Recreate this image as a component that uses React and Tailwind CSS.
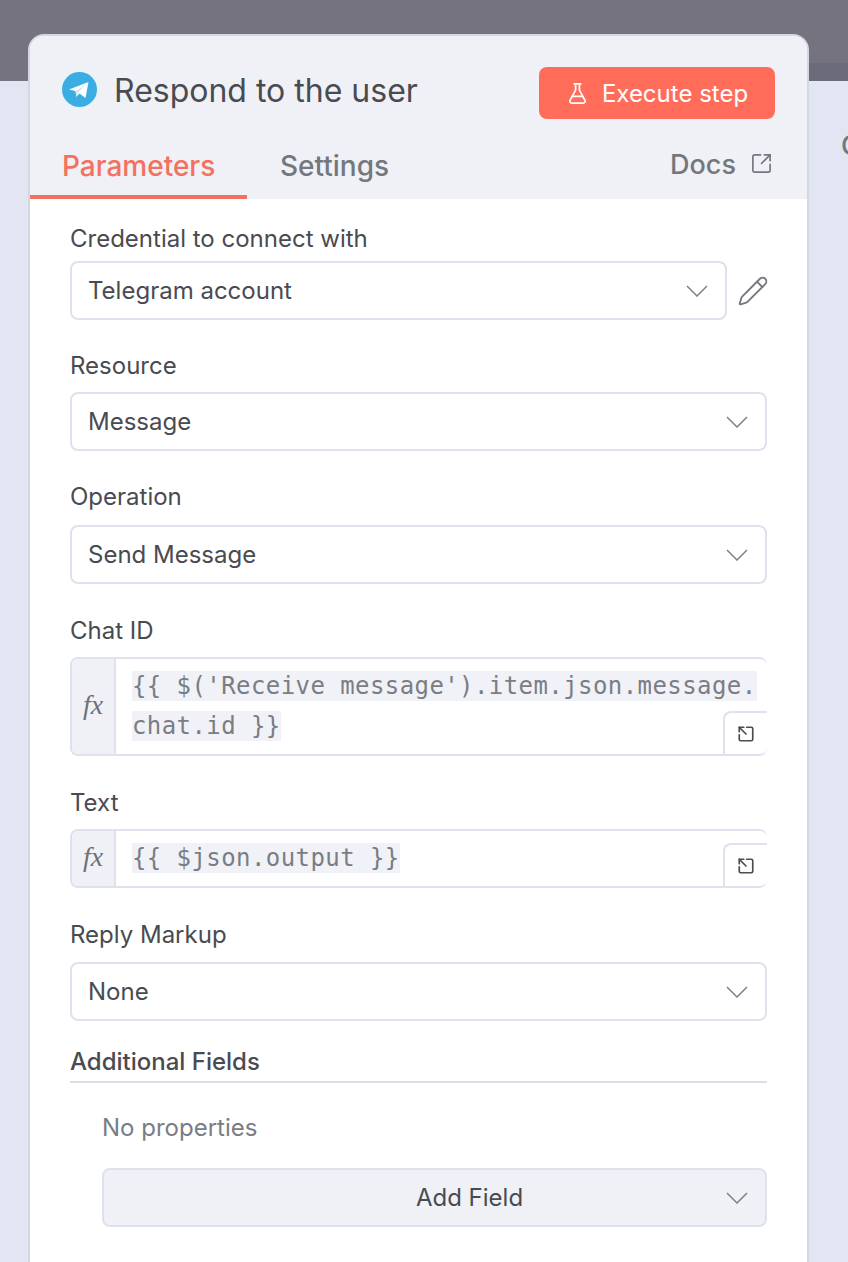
import { FlaskConical, Pencil, SquareArrowOutUpRight } from 'lucide-react';

const Chevron = () => (
  <svg width="22" height="12" viewBox="0 0 22 12" fill="none" stroke="#7e8186" strokeWidth="1.5" className="shrink-0">
    <path d="M1 1l10 10L21 1" />
  </svg>
);

const TelegramIcon = () => (
  <svg width="35" height="35" viewBox="0 0 35 35" className="shrink-0">
    <circle cx="17.5" cy="17.5" r="17.5" fill="#3aaee3" />
    <path d="M7 17.5L26.5 10l-3 16-6-4.5-3 3-1-5.5z" fill="#fff" />
    <path d="M13.500 19.500L24 12l-8 9-1.500 4.500z" fill="#d3e6f2" />
  </svg>
);

const Label = ({ children, className = '' }) => (
  <div className={`h-[30px] text-[24px] leading-[30px] text-[#494b50] ${className}`}>{children}</div>
);

const Select = ({ value, className = '' }) => (
  <div className={`flex h-[59px] items-center justify-between rounded-lg border-2 border-[#dfe1ec] bg-white pl-[16px] pr-[17px] text-[24px] text-[#494b50] ${className}`}>
    <span className="pt-px">{value}</span>
    <Chevron />
  </div>
);

const ExpandButton = () => (
  <div className="absolute bottom-0 right-0 flex h-[43px] w-[44px] items-center justify-center rounded-tl-lg border-l-2 border-t-2 border-[#dfe1ec] bg-white">
    <SquareArrowOutUpRight size={18} strokeWidth={2.25} color="#4a4d52" className="-scale-x-100" />
  </div>
);

const Expression = ({ lines, height, className = '' }) => (
  <div className={`relative flex overflow-hidden rounded-lg border-2 border-r-0 border-[#dfe1ec] bg-white ${height} ${className}`}>
    <div className="flex w-[44px] shrink-0 items-center justify-center border-r-2 border-[#dfe1ec] bg-[#eff1f7] pb-[3px] font-['Liberation_Serif',serif] text-[28px] italic text-[#6f7278]">
      fx
    </div>
    <div className="flex min-w-0 flex-col gap-[10px] pl-[16px] pt-[12px] font-['DejaVu_Sans_Mono',monospace] text-[24px] leading-[30px] tracking-[0.42px] text-[#7a7d83]">
      {lines.map((line) => (
        <span key={line} className="w-fit whitespace-pre bg-[#f0f2f7]">{line}</span>
      ))}
    </div>
    <ExpandButton />
  </div>
);

export default function App() {
  return (
    <div className="relative h-[1262px] overflow-hidden bg-[#e2e6f2] font-['Inter',sans-serif]">
      {/* dim bar behind the dialog */}
      <div className="flex h-[81px] flex-col justify-end bg-[#75737f]">
        <div className="ml-auto h-[18px] w-[40px] bg-[#6c6b79]" />
      </div>

      {/* edge of the canvas text peeking out on the right */}
      <span className="absolute left-[841px] top-[126px] text-[27px] font-medium text-[#74777d]">C</span>

      <div className="relative -mt-[47px] ml-[28px] h-[1240px] w-[781px] overflow-hidden rounded-t-2xl border-x-2 border-t-2 border-[#d3d6e3] bg-white">
        <div className="h-[163px] bg-[#eff1f7]">
          <div className="flex h-[83px] items-end justify-between pl-[32px] pr-[32px]">
            <div className="mb-[9px] flex items-center gap-[17px]">
              <div className="-mt-[4px]">
                <TelegramIcon />
              </div>
              <span className="text-[32px] leading-[38px] text-[#494b50]">Respond to the user</span>
            </div>
            <button className="flex h-[52px] w-[236px] items-center justify-center gap-[13px] rounded-lg bg-[#ff6d5a] text-[24px] text-white">
              <FlaskConical size={23} strokeWidth={1.75} />
              <span className="pt-px">Execute step</span>
            </button>
          </div>
          <div className="flex h-[80px] items-end justify-between pr-[34px]">
            <div className="flex">
              <div className="flex h-[61px] w-[217px] items-center border-b-4 border-[#f4705f] pb-[2px] pl-[32px] text-[28px] font-medium text-[#f4705f]">
                Parameters
              </div>
              <div className="flex h-[61px] items-center pb-[6px] pl-[33px] text-[28px] font-medium text-[#74777d]">
                Settings
              </div>
            </div>
            <div className="flex h-[61px] items-center gap-[14px] pb-[6px] text-[27px] font-medium text-[#74777d]">
              Docs
              <SquareArrowOutUpRight size={23} strokeWidth={1.75} className="-mt-1" />
            </div>
          </div>
        </div>

        <div className="pl-[40px] pr-[40px] pt-[25px]">
          <Label>Credential to connect with</Label>
          <div className="mt-[7px] flex items-center gap-[10px]">
            <Select value="Telegram account" className="w-[657px] shrink-0" />
            <Pencil size={32} strokeWidth={1.4} color="#75787e" className="shrink-0" />
          </div>

          <Label className="mt-[31px]">Resource</Label>
          <Select value="Message" className="mt-[11px]" />

          <Label className="mt-[31px]">Operation</Label>
          <Select value="Send Message" className="mt-[13px]" />

          <Label className="mt-[32px]">Chat ID</Label>
          <Expression
            lines={["{{ $('Receive message').item.json.message.", 'chat.id }}']}
            height="h-[99px]"
            className="mt-[11px]"
          />

          <Label className="mt-[32px]">Text</Label>
          <Expression lines={['{{ $json.output }}']} height="h-[59px]" className="mt-[11px]" />

          <Label className="mt-[32px]">Reply Markup</Label>
          <Select value="None" className="mt-[12px]" />

          <div className="mt-[26px] h-[36px] border-b-2 border-[#dcdee9] text-[24px] font-medium leading-[30px] text-[#494b50]">
            Additional Fields
          </div>

          <div className="pl-[32px]">
            <div className="mt-[30px] h-[30px] text-[24px] leading-[30px] text-[#7a7d83]">No properties</div>
            <div className="relative mt-[25px] flex h-[59px] items-center justify-center rounded-lg border-2 border-[#dfe1ec] bg-[#eff1f7] pl-[70px] text-[24px] text-[#494b50]">
              Add Field
              <div className="absolute right-[17px] top-[22px]">
                <Chevron />
              </div>
            </div>
          </div>
        </div>
      </div>
    </div>
  );
}
